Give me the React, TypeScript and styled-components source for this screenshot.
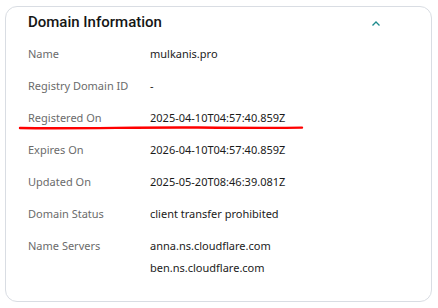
import React from "react";
import styled, { createGlobalStyle } from "styled-components";

const Global = createGlobalStyle`
  html, body { margin: 0; padding: 0; background: #ffffff; }
  body { font-family: "Noto Sans", "Open Sans", sans-serif; }
`;

const Page = styled.div`
  width: 438px;
  height: 308px;
  padding: 6px 6px 6px 5px;
  box-sizing: border-box;
  position: relative;
`;

const Card = styled.section`
  border: 1px solid #d9dde3;
  border-radius: 12px;
  height: 296px;
  box-sizing: border-box;
  padding: 0 0 0 22px;
`;

const Header = styled.div`
  display: flex;
  align-items: center;
  justify-content: space-between;
  height: 30px;
  padding-right: 50px;
`;

const Title = styled.h2`
  margin: 0;
  font-family: Roboto, "Noto Sans", sans-serif;
  font-size: 15px;
  font-weight: 500;
  color: #151515;
`;

const Chevron = styled.svg`
  width: 10px;
  height: 7px;
  margin-top: 3px;
`;

const List = styled.dl`
  margin: 9px 0 0 0;
  display: grid;
  grid-template-columns: 122px 1fr;
`;

const Label = styled.dt`
  font-size: 11px;
  color: #6b6b6b;
  height: 32px;
  line-height: 16px;
`;

const Value = styled.dd`
  margin: 0;
  font-size: 11px;
  color: #1b1b1b;
  line-height: 16px;
  display: flex;
  flex-direction: column;
  gap: 6px;
`;

const Mark = styled.svg`
  position: absolute;
  left: 18px;
  top: 124px;
  width: 288px;
  height: 8px;
`;

const rows: [string, string[]][] = [
  ["Name", ["mulkanis.pro"]],
  ["Registry Domain ID", ["-"]],
  ["Registered On", ["2025-04-10T04:57:40.859Z"]],
  ["Expires On", ["2026-04-10T04:57:40.859Z"]],
  ["Updated On", ["2025-05-20T08:46:39.081Z"]],
  ["Domain Status", ["client transfer prohibited"]],
  ["Name Servers", ["anna.ns.cloudflare.com", "ben.ns.cloudflare.com"]],
];

export default function App() {
  return (
    <Page>
      <Global />
      <Card>
        <Header>
          <Title>Domain Information</Title>
          <Chevron viewBox="0 0 10 7">
            <path d="M1.5 5.5 L5 2 L8.5 5.5" fill="none" stroke="#1c8a8c" strokeWidth="1.3" />
          </Chevron>
        </Header>
        <List>
          {rows.map(([k, vs]) => (
            <React.Fragment key={k}>
              <Label>{k}</Label>
              <Value>
                {vs.map((v) => (
                  <span key={v}>{v}</span>
                ))}
              </Value>
            </React.Fragment>
          ))}
        </List>
      </Card>
      <Mark viewBox="0 0 288 8">
        <path d="M2 4 C60 5 120 3 180 3.5 S260 4 284 3.6" fill="none" stroke="#ff0000" strokeWidth="2.4" strokeLinecap="round" />
      </Mark>
    </Page>
  );
}
